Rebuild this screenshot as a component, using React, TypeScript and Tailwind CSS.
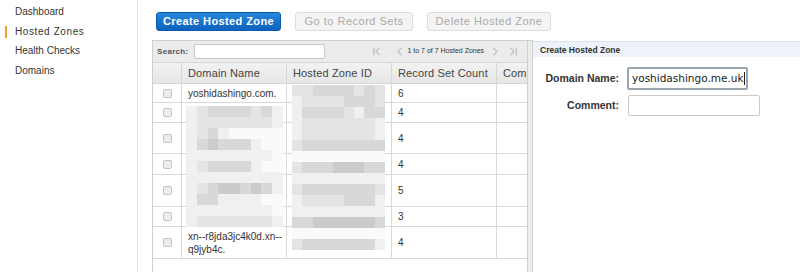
import { ChevronFirst, ChevronLast, ChevronLeft, ChevronRight } from 'lucide-react'

const shades: Record<string, string> = {
  '0': 'bg-[#fafafa]',
  '1': 'bg-[#f0f0f0]',
  '2': 'bg-[#e4e4e4]',
  '3': 'bg-[#d8d8d8]',
  '4': 'bg-[#cbcbcb]',
}

const domainBlur = [
  '123333231',
  '122222221',
  '123100000',
  '134333100',
  '111111110',
  '123333100',
  '111111111',
  '123443431',
  '133111100',
  '111111110',
  '122222221',
]

const zoneBlur = [
  '223333232',
  '122223332',
  '133332133',
  '122222221',
  '122222221',
  '233333333',
  '000000000',
  '233344433',
  '111111111',
  '233333332',
  '122223331',
  '111111111',
  '334444443',
  '000000000',
  '233333331',
]

const rows = [
  { h: 'h-[19px]', domain: ['yoshidashingo.com.'], count: '6' },
  { h: 'h-[20px]', domain: [], count: '4' },
  { h: 'h-[31px]', domain: [], count: '4' },
  { h: 'h-[21px]', domain: [], count: '4' },
  { h: 'h-[32px]', domain: [], count: '5' },
  { h: 'h-[20px]', domain: [], count: '3' },
  { h: 'h-[32px]', domain: ['xn--r8jda3jc4k0d.xn--', 'q9jyb4c.'], count: '4' },
]

const cols = 'grid grid-cols-[29px_105px_105px_105px_30px]'

function Blur({ map, className }: { map: string[]; className: string }) {
  return (
    <div className={`pointer-events-none absolute grid grid-cols-9 ${className}`}>
      {map.flatMap((row, r) =>
        row.split('').map((c, i) => <div key={`${r}-${i}`} className={`h-[11px] ${shades[c]}`} />)
      )}
    </div>
  )
}

function Sidebar() {
  const items = ['Dashboard', 'Hosted Zones', 'Health Checks', 'Domains']
  return (
    <nav className="w-[138px] shrink-0 border-r border-[#e2e2e2] pt-[2px]">
      {items.map((item) => (
        <div key={item} className="relative flex h-[19.5px] items-center pl-[15px] text-[10px] text-[#333]">
          {item === 'Hosted Zones' && <span className="absolute left-[5px] top-[4px] h-[12px] w-[2px] bg-[#f0a030]" />}
          <span className={item === 'Hosted Zones' ? 'tracking-[0.6px]' : ''}>{item}</span>
        </div>
      ))}
    </nav>
  )
}

function Toolbar() {
  return (
    <div className="flex gap-[14px] pl-[18px] pt-[12px]">
      <button className="h-[19px] w-[125px] rounded-[3px] border border-[#0a5aab] bg-gradient-to-b from-[#2787dc] to-[#0c62bd] text-[11px] font-bold tracking-[0.4px] text-white">
        Create Hosted Zone
      </button>
      <button className="h-[19px] w-[118px] rounded-[3px] border border-[#dcdcdc] bg-[#f4f4f4] text-[11px] tracking-[0.5px] text-[#aaa]">
        Go to Record Sets
      </button>
      <button className="h-[19px] w-[124px] rounded-[3px] border border-[#dcdcdc] bg-[#f4f4f4] text-[11px] tracking-[0.5px] text-[#aaa]">
        Delete Hosted Zone
      </button>
    </div>
  )
}

function ZoneGrid() {
  return (
    <div className="flex w-[381px] shrink-0 border-l border-t border-[#cfcfcf]">
      <div className="w-[374px]">
        <div className="flex h-[21px] items-center bg-[#ececec] pl-[4px]">
          <span className="text-[8px] font-bold tracking-[0.3px] text-[#555]">Search:</span>
          <input className="ml-[6px] h-[15px] w-[131px] rounded-[2px] border border-[#c8c8c8] bg-white" />
          <div className="ml-[45px] flex items-center whitespace-nowrap text-[#c2c2c2]">
            <ChevronFirst size={13} strokeWidth={2.5} />
            <ChevronLeft size={13} strokeWidth={2.5} className="ml-[10px]" />
            <span className="ml-[1px] text-[7px] text-[#333]">1 to 7 of 7 Hosted Zones</span>
            <ChevronRight size={13} strokeWidth={2.5} className="ml-[5px]" />
            <ChevronLast size={13} strokeWidth={2.5} className="ml-[5px]" />
          </div>
        </div>
        <div className={`${cols} h-[22px] border-y border-[#d6d6d6] bg-gradient-to-b from-[#f2f2f2] to-[#e6e6e6] text-[11px] tracking-[0.15px] text-[#444]`}>
          <div className="border-r border-[#d6d6d6]" />
          {['Domain Name', 'Hosted Zone ID', 'Record Set Count', 'Comment'].map((h) => (
            <div key={h} className="flex items-center overflow-hidden whitespace-nowrap border-r border-[#d6d6d6] pl-[6px] last:border-r-0">
              {h}
            </div>
          ))}
        </div>
        <div className="relative">
          {rows.map((r, i) => (
            <div key={i} className={`${cols} ${r.h} border-b border-[#d9d9d9] text-[10px] text-[#333]`}>
              <div className="flex items-center justify-center border-r border-[#d9d9d9]">
                <span className="h-[9px] w-[9px] rounded-[2px] border border-[#c4c4c4] bg-[#ededed]" />
              </div>
              <div className="flex flex-col justify-center whitespace-nowrap border-r border-[#d9d9d9] pl-[6px] leading-[13px]">
                {r.domain.map((line) => (
                  <span key={line}>{line}</span>
                ))}
              </div>
              <div className="border-r border-[#d9d9d9]" />
              <div className="flex items-center border-r border-[#d9d9d9] pl-[6px]">{r.count}</div>
              <div />
            </div>
          ))}
          <div className="h-[20px]" />
          <Blur map={domainBlur} className="left-[33px] top-[22px] w-[97px]" />
          <Blur map={zoneBlur} className="left-[139px] top-[1px] w-[93px]" />
        </div>
      </div>
      <div className="w-[7px] border-x border-[#d0d0d0] bg-[#ececec]" />
    </div>
  )
}

function CreatePanel() {
  return (
    <div className="flex-1 pt-[1px]">
      <div className="flex h-[16px] items-center border-t border-[#dde3ee] bg-[#eef3fb] pl-[7px] pt-[2px] text-[8.5px] font-bold text-[#333]">
        Create Hosted Zone
      </div>
      <div className="mt-[10px] grid grid-cols-[86px_auto] items-center gap-x-[8px] gap-y-[5px] text-[#333]">
        <label className="text-right text-[10.5px] font-bold">Domain Name:</label>
        <div className="flex h-[23px] w-[121px] items-center rounded-[2px] border-2 border-[#9ba3ad] pl-[3px] text-[10.5px] text-[#222] [font-family:'DejaVu_Sans',sans-serif]">
          yoshidashingo.me.uk<span className="ml-[1px] h-[13px] w-px bg-[#222]" />
        </div>
        <label className="text-right text-[10.5px] font-bold">Comment:</label>
        <div className="ml-[1px] h-[21px] w-[132px] rounded-[2px] border border-[#c9c9c9] bg-white" />
      </div>
    </div>
  )
}

export default function App() {
  return (
    <div className="flex h-[272px] w-[800px] overflow-hidden bg-white [font-family:'Liberation_Sans',Arial,sans-serif]">
      <Sidebar />
      <main className="flex min-w-0 flex-1 flex-col">
        <Toolbar />
        <div className="mt-[9px] flex pl-[14px]">
          <ZoneGrid />
          <CreatePanel />
        </div>
      </main>
    </div>
  )
}
